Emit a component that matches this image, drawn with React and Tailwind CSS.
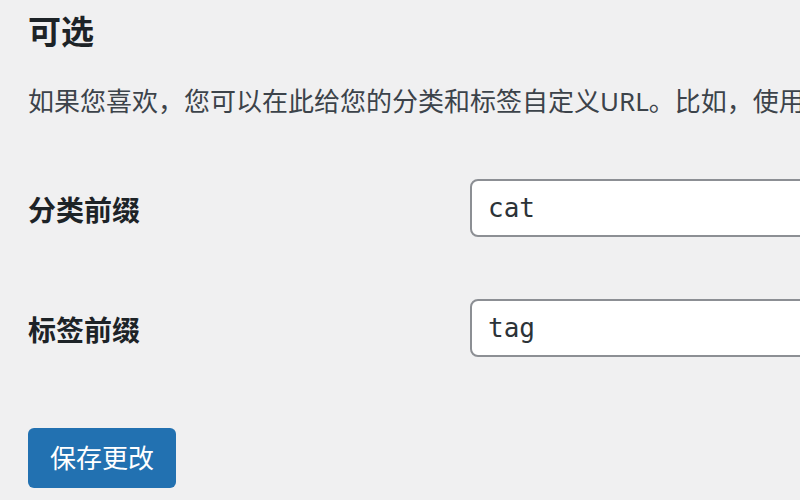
const cjk = "font-['Noto_Sans','Noto_Sans_CJK_SC',sans-serif]";

const Field = ({ label, value }) => (
  <div className="flex h-[120px] items-start">
    <div className="w-[442px] shrink-0 pt-[42px] text-[28px] leading-[40px] font-bold text-[#1d2327]">
      {label}
    </div>
    <div className="pt-[31px]">
      <input
        type="text"
        defaultValue={value}
        className="h-[58px] w-[650px] rounded-[8px] border-2 border-[#8c8f94] bg-white px-[16px] font-['DejaVu_Sans_Mono',monospace] text-[26px] text-[#2c3338] outline-none"
      />
    </div>
  </div>
);

const App = () => {
  return (
    <div className={`h-[500px] w-full overflow-hidden bg-[#f0f0f1] pl-[28px] ${cjk}`}>
      <h2 className="mt-[12px] h-[40px] text-[33px] leading-[40px] font-bold text-[#1d2327]">
        可选
      </h2>
      <p className="mt-[30px] whitespace-nowrap text-[26px] leading-[39px] text-[#3c434a]">
        如果您喜欢，您可以在此给您的分类和标签自定义URL。比如，使用
      </p>

      <form className="mt-[27px]">
        <Field label="分类前缀" value="cat" />
        <Field label="标签前缀" value="tag" />

        <button
          type="button"
          className="mt-[40px] h-[60px] rounded-[6px] bg-[#2271b1] px-[22px] text-[26px] text-white"
        >
          保存更改
        </button>
      </form>
    </div>
  );
};

export default App;
